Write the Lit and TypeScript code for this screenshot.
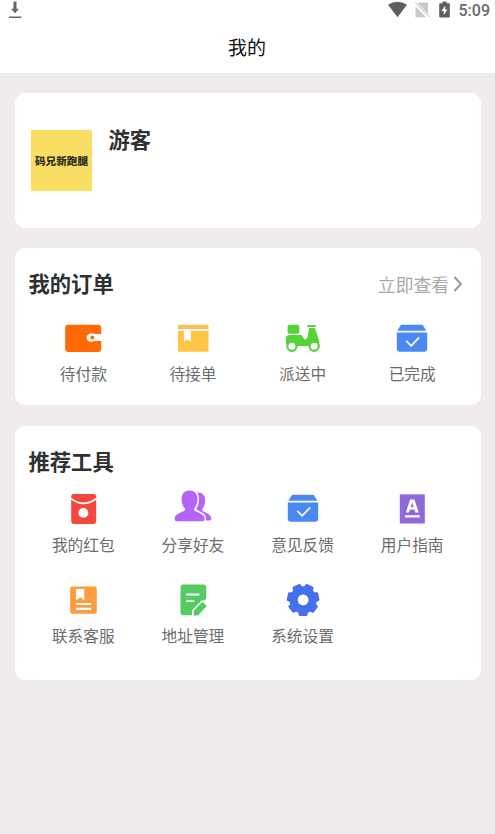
import { LitElement, html, css, svg, SVGTemplateResult } from "lit";
import { customElement, property } from "lit/decorators.js";

/** Outline of a cog with evenly spaced, slightly tapered teeth, one pointing down. */
function cog(cx: number, cy: number, teeth: number, outer: number, inner: number): string {
  const step = (Math.PI * 2) / teeth;
  const points: string[] = [];
  for (let i = 0; i < teeth; i++) {
    const mid = Math.PI / 2 + i * step;
    const corners: [number, number][] = [
      [inner, -0.36],
      [outer, -0.24],
      [outer, 0.24],
      [inner, 0.36],
    ];
    for (const [r, k] of corners) {
      const a = mid + k * step;
      points.push(`${(cx + r * Math.cos(a)).toFixed(2)} ${(cy + r * Math.sin(a)).toFixed(2)}`);
    }
  }
  return `M${points.join("L")}Z`;
}

const caseIcon = svg`
  <path fill="#4a88f2" d="M10.3 6.8h19.2q1 0 1.6.8l3.2 5.2H5.3l3.3-5.2q.6-.8 1.7-.8Z"/>
  <path fill="#4a88f2" d="M4.8 14.4h30.4v16.4q0 3-3 3H7.8q-3 0-3-3Z"/>
  <path fill="none" stroke="#fff" stroke-width="1.7" d="m14.2 22.9 5 4.9 8-8.5"/>`;

const icons: Record<string, SVGTemplateResult> = {
  wallet: svg`
    <path fill="#ff6a05" d="M5.2 6.8h30q3 0 3 3v6.4h-8.4a4 4 0 1 0 0 6.8h8.4v8q0 3-3 3h-30q-3 0-3-3V9.8q0-3 3-3Z"/>
    <circle cx="29.4" cy="19.5" r="4" fill="#fff"/>
    <path fill="#fff" d="M29 16.2h10v6.6H29z"/>
    <circle cx="29.3" cy="19.5" r="2" fill="#ff6a05"/>`,
  parcel: svg`
    <path fill="#f7c257" d="M5.8 6.8h28.8q.9 0 .9.9V11H4.9V7.7q0-.9.9-.9Z"/>
    <path fill="#fec548" d="M4.9 12.7h30.6v20.1q0 1-1 1H5.9q-1 0-1-1Z"/>
    <path fill="#fff" d="M10.9 12.4h7v11.4l-3.5-2.6-3.5 2.6Z"/>`,
  scooter: svg`
    <rect x="4.6" y="6.8" width="11.8" height="9" rx="2" fill="#54d436"/>
    <path fill="#54d436" d="M24.4 6.9h8.3v2.1h-8.3ZM26 10h6l4.7 14.5-3 3.5H8L2.9 26v-5.500q0-3.600 3.600-3.600h11q.9 0 1.500.8l3 4.300 2.600-2.700Z"/>
    <g fill="#fff" stroke="#54d436" stroke-width="2.2">
      <circle cx="8.9" cy="28.2" r="4.6"/><circle cx="31.2" cy="28.2" r="4.6"/>
    </g>`,
  done: caseIcon,
  packet: svg`
    <path fill="#f5473d" d="M10.6 6h20q2.600 0 2.600 2.600v1.200q-13 9.400-25 0V8.600Q8.200 6 10.600 6Z"/>
    <path fill="#f5473d" d="M8.200 11.700q12.400 9 25 0V33q0 3-3 3h-19q-3 0-3-3Z"/>
    <circle cx="20.4" cy="24.9" r="4.9" fill="#fff"/>`,
  friends: svg`
    <path fill="#b264fb" d="M23 4.800c6-1.200 9.300 2.900 9.100 7.700-.1 4-1.200 6.500-2.600 7.900-.8 1-.6 2.200.5 2.800 4 1.900 8.300 3.500 8.300 7.600 0 1.400-1 1.600-2 1.600h-8L20 28V10Z"/>
    <path fill="#fff" d="M16 .8c6.600 0 10 4 10 10.200 0 4-.9 6.600-2.200 8.600-.6 1-.4 1.800.5 2.300 5.500 2.600 8.800 4.600 8.800 8.700 0 1.600-.3 2.600-1 3.400H16Z"/>
    <path fill="#b264fb" d="M16.500 2.600c5 0 8 3.400 8 8.600 0 3.900-1.300 6.800-3 8.800-.8 1-.6 2.200.5 2.900 4.500 2.200 9.700 3.600 9.700 7.800 0 1.800-1.200 2.600-3 2.600H4.700c-2 0-3.100-.9-3.100-2.600 0-4.200 5.100-5.600 9.400-7.800 1.300-.7 1.500-1.900.6-2.900-1.800-2-3-4.900-3-8.800 0-5.200 3.100-8.600 7.900-8.600Z"/>`,
  manual: svg`
    <path fill="#9068da" d="M7.800 6.300h25v29.200h-25z"/>
    <path fill="#fff" fill-rule="evenodd" d="M18.100 11.400h4.300l4.300 13h-3.300l-.9-2.900h-4.600l-.9 2.900h-3.100ZM20.200 14.400l-1.500 4.800h3Z"/>
    <path fill="#fff" d="M13.100 27.200h14.600v2.300H13.100z"/>`,
  ledger: svg`
    <rect x="7.2" y="7.4" width="26.6" height="27.4" rx="2" fill="#fd9e3e"/>
    <path fill="#fff" d="M13.100 9.900h8.200v11.700l-4.100-3.400-4.100 3.400ZM13.100 24.100h15v2h-15ZM13.100 28.800h15v2.300h-15z"/>`,
  note: svg`
    <path fill="#56cb61" d="M10.300 5.600h20.200q2.800 0 2.800 2.800v11.200L19 33.500v2.800h-8.700q-2.800 0-2.800-2.800V8.400q0-2.800 2.800-2.800Z"/>
    <path fill="none" stroke="#fff" stroke-width="1.9" stroke-linecap="round" d="M14 15.500h11.600M14 22.100h6.600"/>
    <path fill="#56cb61" stroke="#fff" stroke-width="3" stroke-linejoin="round" paint-order="stroke" d="m30.200 23.200 3.100 3.200q.5.600 0 1.200l-7.600 8.100q-.7.700-1.700.7h-3.300v-3.700q0-.9.700-1.600l7.500-7.900q.7-.6 1.300 0Z"/>`,
  settings: svg`
    <path fill="#4470ec" stroke="#4470ec" stroke-width="2" stroke-linejoin="round" d=${cog(20.1, 20.9, 7, 15.4, 12.7)}/>
    <circle cx="20.1" cy="20.9" r="5.4" fill="#fff"/>`,
  feedback: caseIcon,
};

interface Entry {
  icon: string;
  label: string;
}

const orders: Entry[] = [
  { icon: "wallet", label: "待付款" },
  { icon: "parcel", label: "待接单" },
  { icon: "scooter", label: "派送中" },
  { icon: "done", label: "已完成" },
];

const tools: Entry[] = [
  { icon: "packet", label: "我的红包" },
  { icon: "friends", label: "分享好友" },
  { icon: "feedback", label: "意见反馈" },
  { icon: "manual", label: "用户指南" },
  { icon: "ledger", label: "联系客服" },
  { icon: "note", label: "地址管理" },
  { icon: "settings", label: "系统设置" },
];

@customElement("entry-grid")
class EntryGrid extends LitElement {
  @property({ attribute: false }) entries: Entry[] = [];

  static styles = css`
    :host {
      display: grid;
      grid-template-columns: repeat(4, 1fr);
      grid-auto-rows: 91.5px;
    }
    .entry {
      display: flex;
      flex-direction: column;
      align-items: center;
    }
    .icon {
      display: block;
      width: 40px;
      height: 40px;
    }
    .label {
      margin-top: var(--label-gap, 4px);
      font-size: 15.7px;
      line-height: 24px;
      color: #6c6c6c;
      white-space: nowrap;
    }
  `;

  render() {
    return this.entries.map(
      (e) => html`<div class="entry">
        <svg class="icon" viewBox="0 0 40 40">${icons[e.icon]}</svg>
        <span class="label">${e.label}</span>
      </div>`,
    );
  }
}

@customElement("app-root")
class AppRoot extends LitElement {
  static styles = css`
    :host {
      display: block;
      height: 834px;
      overflow: hidden;
      background: #f0eceb;
      font-family: "Noto Sans CJK SC", sans-serif;
    }
    .top {
      height: 73px;
      background: #fff;
    }
    .status {
      display: flex;
      align-items: center;
      justify-content: space-between;
      height: 20px;
      padding: 0 5px 0 7px;
    }
    .status svg {
      display: block;
    }
    .signals {
      display: flex;
      align-items: center;
    }
    .clock {
      margin-left: 6px;
      padding-top: 1px;
      font: 500 16px/20px Roboto, sans-serif;
      color: #6a6a6a;
    }
    .heading {
      height: 53px;
      padding-right: 1px;
      text-align: center;
      font-size: 19px;
      line-height: 53px;
      color: #111;
    }
    .cards {
      display: flex;
      flex-direction: column;
      gap: 20.5px;
      padding: 20px 14.5px 0 15px;
    }
    .card {
      box-sizing: border-box;
      border-radius: 10px;
      background: #fff;
      padding: 0 13.5px;
    }
    .profile {
      display: flex;
      height: 134.5px;
      padding: 37px 16px 0;
      gap: 16.5px;
    }
    .avatar {
      display: flex;
      align-items: center;
      justify-content: center;
      width: 61px;
      height: 61px;
      background: #f8de62;
      font-size: 10.6px;
      font-weight: 900;
      color: #35311f;
      white-space: nowrap;
    }
    .name {
      font-size: 21.3px;
      font-weight: 700;
      line-height: 17px;
      color: #303030;
    }
    .orders {
      height: 157px;
    }
    .tools {
      height: 254.5px;
    }
    .bar {
      display: flex;
      align-items: center;
      justify-content: space-between;
      height: 30px;
      padding-top: 21px;
    }
    .title {
      margin-top: -3px;
      font-size: 21.3px;
      font-weight: 700;
      color: #303030;
    }
    .more {
      display: flex;
      align-items: center;
      gap: 4px;
      padding-right: 4px;
      font-size: 17.8px;
      color: #a8a8a8;
    }
    .orders entry-grid {
      margin-top: 19px;
    }
    .tools entry-grid {
      --label-gap: 5px;
      margin-top: 11px;
    }
  `;

  render() {
    return html`
      <div class="top">
        <div class="status">
          <svg width="16" height="20" viewBox="0 0 16 20">
            <path fill="#666" d="M6.500 1.500h3v7.300H12l-4 4.500-4-4.500h2.500ZM2 16.400h12.300V18H2z" />
          </svg>
          <div class="signals">
            <svg width="66" height="20" viewBox="-1 0 66 20">
              <path fill="#5e5e5e" d="M0 4.800Q9.500-1.200 19 4.800L9.500 17.300Z" />
              <path fill="#c9c9c9" d="M28 2.600 41.500 16v1.500L27.200 3.300ZM31.500 2.400H40v11.200L29.800 3.600ZM27.500 6.500v10.700h10.700Z" />
              <path fill="#5e5e5e" d="M54.500 1.500h4v1.700h2.300q1 0 1 1v12.300q0 1-1 1h-8.600q-1 0-1-1V4.200q0-1 1-1h2.300Z" />
              <path fill="#fff" d="M57.200 5.500v4h2.300L55.800 15v-4h-2.300Z" />
            </svg>
            <span class="clock">5:09</span>
          </div>
        </div>
        <div class="heading">我的</div>
      </div>
      <div class="cards">
        <div class="card profile">
          <div class="avatar">码兄新跑腿</div>
          <div class="name">游客</div>
        </div>
        <div class="card orders">
          <div class="bar">
            <span class="title">我的订单</span>
            <span class="more">
              立即查看
              <svg width="10" height="18" viewBox="0 0 10 18">
                <path fill="none" stroke="#999" stroke-width="2" d="m1.500 2 6.300 7-6.300 7" />
              </svg>
            </span>
          </div>
          <entry-grid .entries=${orders}></entry-grid>
        </div>
        <div class="card tools">
          <div class="bar"><span class="title">推荐工具</span></div>
          <entry-grid .entries=${tools}></entry-grid>
        </div>
      </div>
    `;
  }
}
